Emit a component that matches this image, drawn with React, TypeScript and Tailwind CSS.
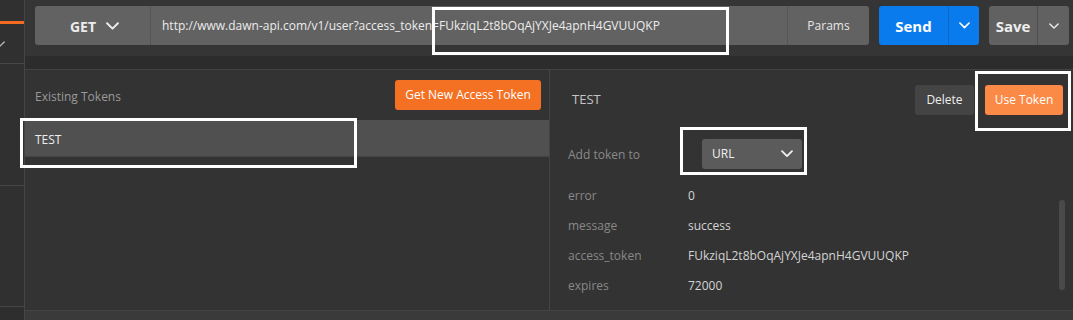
import React from "react";

const Chevron = ({ className = "", size = 12, stroke = "#e6e6e6", width = 1.6 }: { className?: string; size?: number; stroke?: string; width?: number }) => (
  <svg className={className} width={size} height={size * 0.6} viewBox="0 0 12 7" fill="none">
    <polyline points="1,1 6,6 11,1" stroke={stroke} strokeWidth={width} strokeLinecap="round" strokeLinejoin="round" />
  </svg>
);

const rows = [
  ["error", "0"],
  ["message", "success"],
  ["access_token", "FUkziqL2t8bOqAjYXJe4apnH4GVUUQKP"],
  ["expires", "72000"],
];

export default function App() {
  return (
    <div
      className="relative w-[1073px] h-[320px] overflow-hidden bg-[#333333] flex text-[12px]"
      style={{ fontFamily: '"Open Sans", "Noto Sans", sans-serif' }}
    >
      {/* sidebar */}
      <div className="w-[25px] shrink-0 border-r border-[#454545] bg-[#303030] flex flex-col">
        <div className="h-[21px]" />
        <div className="h-[3px] bg-[#f26b21]" />
        <div className="h-[40px] border-b border-[#474747] relative">
          <div className="absolute left-[-5px] top-[17px]">
            <Chevron size={10} stroke="#bbb" width={1.6} />
          </div>
        </div>
        <div className="h-[122px] border-b border-[#474747]" />
        <div className="h-[121px] border-b border-[#474747]" />
        <div className="flex-1 bg-[#2e2e2e]" />
      </div>

      {/* main */}
      <div className="flex-1 flex flex-col min-w-0">
        {/* top bar */}
        <div className="h-[56px] bg-[#353535] flex items-start pt-[6px] pl-[10px]">
          <div className="flex h-[39px] w-[834px] rounded-[3px] bg-[#626262] overflow-hidden">
            <div className="w-[116px] flex items-center justify-center gap-[10px] border-r border-[#555] text-[14px] font-bold text-[#ececec] pl-[4px] pt-[1px]">
              <span>GET</span>
              <Chevron size={13} stroke="#ececec" width={1.8} />
            </div>
            <div className="flex-1 flex items-center pl-[11px] pt-[1px] text-[#ececec] text-[12px]">
              http://www.dawn-api.com/v1/user?access_token=FUkziqL2t8bOqAjYXJe4apnH4GVUUQKP
            </div>
            <div className="w-[82px] flex items-center justify-center border-l border-[#555] text-[#e6e6e6] text-[12px] pt-[1px]">
              Params
            </div>
          </div>
          <div className="ml-[10px] flex h-[39px] w-[100px] rounded-[3px] bg-[#097bed] overflow-hidden">
            <div className="w-[70px] flex items-center justify-center text-white font-bold text-[15px] border-r border-[#0a68c8] pt-[1px]">
              Send
            </div>
            <div className="flex-1 flex items-center justify-center">
              <Chevron size={11} stroke="#fff" width={1.8} />
            </div>
          </div>
          <div className="ml-[10px] flex h-[39px] w-[80px] rounded-[3px] bg-[#616161] overflow-hidden">
            <div className="w-[49px] flex items-center justify-center text-[#eee] font-bold text-[15px] border-r border-[#4e4e4e] pt-[1px]">
              Save
            </div>
            <div className="flex-1 flex items-center justify-center">
              <Chevron size={10} stroke="#eee" width={1.6} />
            </div>
          </div>
        </div>
        {/* band */}
        <div className="h-[14px] bg-[#2c2c2c] border-b border-[#424242]" />

        {/* panels */}
        <div className="flex h-[240px]">
          {/* left */}
          <div className="w-[525px] shrink-0 border-r border-[#444] flex flex-col">
            <div className="h-[50px] flex items-center justify-between pl-[10px] pr-[8px]">
              <span className="text-[#9a9a9a] text-[12px] mt-[3px]">Existing Tokens</span>
              <button className="h-[30px] w-[146px] rounded-[3px] bg-[#f47023] text-white text-[12px]">
                Get New Access Token
              </button>
            </div>
            <div className="h-[37px] bg-[#505050] border-b border-[#444] flex items-center pl-[10px] pt-[3px] text-[#eee] text-[12px]">
              TEST
            </div>
          </div>
          {/* right */}
          <div className="flex-1 relative flex flex-col">
            <div className="h-[15px]" />
            <div className="h-[30px] flex items-center justify-between pl-[22px] pr-[10px]">
              <span className="text-[#c4c4c4] text-[13px]">TEST</span>
              <div className="flex gap-[11px]">
                <button className="h-[30px] w-[59px] rounded-[3px] bg-[#444444] text-[#eee] text-[12px]">Delete</button>
                <button className="h-[30px] w-[78px] rounded-[3px] bg-[#fc8a47] text-white text-[12px]">Use Token</button>
              </div>
            </div>
            <div className="h-[24px]" />
            <div className="h-[30px] flex items-center pl-[18px]">
              <span className="w-[134px] text-[#8a8a8a] text-[12px] mt-[2px]">Add token to</span>
              <div className="w-[100px] h-[30px] rounded-[3px] bg-[#5b5b5b] flex items-center justify-between pl-[10px] pr-[9px] text-[#f0f0f0] text-[12px]">
                <span>URL</span>
                <Chevron size={12} stroke="#f0f0f0" width={1.8} />
              </div>
            </div>
            <div className="h-[12px]" />
            {rows.map(([k, v]) => (
              <div key={k} className="h-[30px] flex items-center pl-[18px] text-[12px]">
                <span className="w-[120px] text-[#888]">{k}</span>
                <span className="text-[#d4d4d4]">{v}</span>
              </div>
            ))}
            <div className="absolute left-[509px] top-[130px] w-[6px] h-[90px] rounded-full bg-[#4a4a4a]" />
          </div>
        </div>
        {/* bottom */}
        <div className="flex-1 bg-[#3a3a3a] border-t border-[#444]" />
      </div>

      {/* annotation boxes */}
      <div className="absolute left-[432px] top-[7px] w-[297px] h-[48px] border-[3px] border-white" />
      <div className="absolute left-[20px] top-[118px] w-[337px] h-[50px] border-[3px] border-white" />
      <div className="absolute left-[975px] top-[71px] w-[96px] h-[60px] border-[3px] border-white" />
      <div className="absolute left-[680px] top-[127px] w-[127px] h-[48px] border-[3px] border-white" />
    </div>
  );
}
